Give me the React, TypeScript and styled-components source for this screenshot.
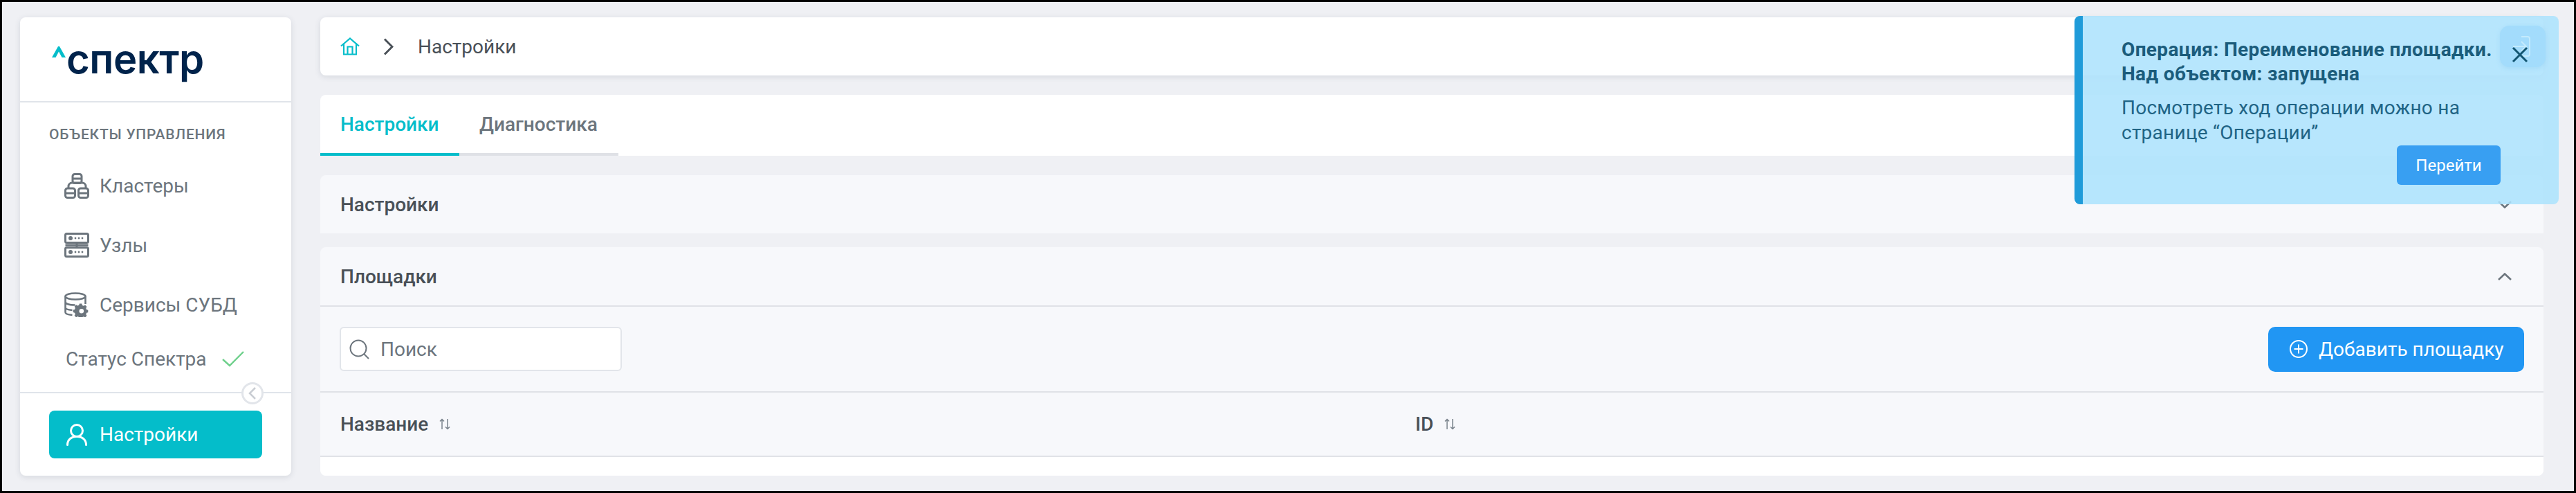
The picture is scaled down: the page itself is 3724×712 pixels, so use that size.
import React from 'react';
import styled, { createGlobalStyle } from 'styled-components';

const Global = createGlobalStyle`
  html, body { margin: 0; padding: 0; background: #000; }
  * { box-sizing: border-box; }
  body { font-family: Roboto, "Noto Sans", sans-serif; }
`;

const Frame = styled.div`
  position: relative;
  width: 3724px;
  height: 712px;
  border: 3px solid #000;
  background: #eff0f4;
  display: flex;
  gap: 42px;
  padding: 22px 44px 22px 26px;
  overflow: hidden;
`;

const Sidebar = styled.aside`
  position: relative;
  width: 392px;
  flex: none;
  display: flex;
  flex-direction: column;
  background: #fff;
  border-radius: 8px;
  box-shadow: 0 2px 8px rgba(60, 70, 90, 0.14);
`;

const LogoArea = styled.div`
  height: 123px;
  flex: none;
  display: flex;
  align-items: flex-start;
  padding: 42px 0 0 46px;
  border-bottom: 2px solid #e0e4ea;
`;

const LogoMark = styled.svg`
  width: 20px;
  height: 16px;
  flex: none;
`;

const LogoText = styled.span`
  font-family: Inter, sans-serif;
  font-weight: 600;
  font-size: 58px;
  line-height: 50px;
  letter-spacing: -0.5px;
  color: #00234b;
  margin: -7px 0 0 1px;
`;

const SideBody = styled.div`
  flex: 1;
  padding: 30px 0 0 42px;
`;

const SectionLabel = styled.div`
  font-size: 21px;
  font-weight: 500;
  line-height: 32px;
  letter-spacing: 0.75px;
  color: #6c757d;
  margin-bottom: 15px;
`;

const NavItem = styled.div`
  height: 86px;
  display: flex;
  align-items: center;
  gap: 15px;
  padding-left: 22px;
  font-size: 28px;
  color: #6c757d;
`;

const StatusRow = styled.div`
  height: 71px;
  display: flex;
  align-items: center;
  gap: 22px;
  padding-left: 24px;
  font-size: 28px;
  color: #6c757d;
`;

const SideFooter = styled.div`
  flex: none;
  height: 121px;
  padding: 25px 42px;
  border-top: 2px solid #e0e4ea;
`;

const ActiveButton = styled.div`
  height: 69px;
  display: flex;
  align-items: center;
  gap: 18px;
  padding-left: 25px;
  border-radius: 8px;
  background: #04bdca;
  color: #fff;
  font-size: 28px;
`;

const Collapse = styled.div`
  position: absolute;
  left: 320px;
  top: 527px;
  width: 32px;
  height: 32px;
  border-radius: 50%;
  border: 3px solid #e2e5ea;
  background: #fff;
  display: flex;
  align-items: center;
  justify-content: center;
`;

const Main = styled.main`
  flex: 1;
  min-width: 0;
  display: flex;
  flex-direction: column;
`;

const Breadcrumbs = styled.div`
  height: 84px;
  flex: none;
  display: flex;
  align-items: center;
  padding-left: 29px;
  background: #fff;
  border-radius: 8px;
  box-shadow: 0 2px 8px rgba(60, 70, 90, 0.14);
  font-size: 28px;
  color: #495057;
`;

const Crumb = styled.span`
  margin-left: 35px;
`;

const ChevronBox = styled.span`
  display: flex;
  margin-left: 34px;
`;

const TabsCard = styled.div`
  height: 88px;
  flex: none;
  margin-top: 28px;
  display: flex;
  background: #fff;
  border-radius: 8px 8px 0 0;
`;

const Tab = styled.div<{ $active?: boolean; $w: number }>`
  width: ${p => p.$w}px;
  height: 88px;
  padding-left: 29px;
  display: flex;
  align-items: center;
  font-size: 28px;
  font-weight: 500;
  color: ${p => (p.$active ? '#04bdca' : '#6c757d')};
  border-bottom: 4px solid ${p => (p.$active ? '#04bdca' : '#dfe1e6')};
`;

const Panel = styled.section<{ $grow?: boolean; $gap: number }>`
  margin-top: ${p => p.$gap}px;
  flex: ${p => (p.$grow ? '1' : 'none')};
  display: flex;
  flex-direction: column;
  background: #f7f8fb;
  border-radius: ${p => (p.$grow ? '8px' : '8px 8px 0 0')};
  overflow: hidden;
`;

const PanelHead = styled.div`
  height: 84px;
  flex: none;
  display: flex;
  align-items: center;
  justify-content: space-between;
  padding: 0 46px 0 29px;
  font-size: 28px;
  font-weight: 500;
  color: #495057;
`;

const Toolbar = styled.div`
  height: 124px;
  flex: none;
  display: flex;
  align-items: center;
  justify-content: space-between;
  padding: 0 28px;
  border-top: 2px solid #e0e2e7;
`;

const Search = styled.div`
  width: 408px;
  height: 64px;
  display: flex;
  align-items: center;
  gap: 16px;
  padding-left: 12px;
  background: #fff;
  border: 2px solid #e2e5ea;
  border-radius: 6px;
  font-size: 28px;
  color: #6c757d;
`;

const AddButton = styled.button`
  width: 370px;
  height: 65px;
  display: flex;
  align-items: center;
  gap: 16px;
  padding: 0 0 0 31px;
  border: 0;
  border-radius: 10px;
  background: #2196f3;
  color: #fff;
  font-family: Roboto, sans-serif;
  font-size: 28px;
`;

const TableHead = styled.div`
  height: 95px;
  flex: none;
  display: grid;
  grid-template-columns: 1554px 1fr;
  align-items: center;
  border-top: 2px solid #e0e2e7;
  border-bottom: 2px solid #e0e2e7;
`;

const HeadCell = styled.div`
  display: flex;
  align-items: center;
  gap: 16px;
  padding-left: 29px;
  font-size: 28px;
  font-weight: 500;
  color: #495057;
`;

const TableBody = styled.div`
  flex: 1;
  background: #fff;
`;

const Toast = styled.div`
  position: absolute;
  top: 20px;
  right: 22px;
  width: 700px;
  height: 272px;
  padding: 31px 0 0 56px;
  border-left: 12px solid #1f9bd9;
  border-radius: 8px;
  background: rgba(173, 227, 253, 0.88);
  display: flex;
  flex-direction: column;
`;

const ToastTitle = styled.div`
  font-size: 28px;
  font-weight: 700;
  line-height: 35px;
  letter-spacing: 0.35px;
  color: #1b5c7b;
`;

const ToastText = styled.div`
  margin-top: 14px;
  font-size: 28px;
  line-height: 36px;
  letter-spacing: 0.25px;
  color: #1f6485;
`;

const ToastClose = styled.div`
  position: absolute;
  top: 14px;
  right: 19px;
  width: 66px;
  height: 60px;
  border-radius: 14px;
  background: #a3dcfc;
  box-shadow: 0 2px 6px rgba(100, 180, 230, 0.2);
`;

const CloseIcon = styled.svg`
  display: block;
`;

const ToastAction = styled.div`
  width: 150px;
  height: 58px;
  align-self: flex-end;
  margin: auto 84px 28px 0;
  display: flex;
  align-items: center;
  justify-content: center;
  border-radius: 6px;
  background: #389ff2;
  color: #fff;
  font-size: 24px;
`;

const G = '#6c757d';

const ClustersIcon = () => (
  <svg width="36" height="37" viewBox="0 0 36 37" fill="none" stroke={G} strokeWidth="3">
    <rect x="12" y="1.5" width="13" height="13" rx="3" />
    <path d="M12 8h13M6 23v-4a5 5 0 0 1 5-5h15a5 5 0 0 1 5 5v4" />
    <rect x="1.5" y="22" width="14" height="13.5" rx="3" />
    <rect x="20.5" y="22" width="14" height="13.5" rx="3" />
    <path d="M1.5 29h14M20.5 29h14" />
  </svg>
);

const NodesIcon = () => (
  <svg width="36" height="36" viewBox="0 0 36 36" fill="none" stroke={G} strokeWidth="3">
    <rect x="1.5" y="1.5" width="33" height="13" rx="2" />
    <rect x="1.5" y="21.5" width="33" height="13" rx="2" />
    <path d="M18 14.5v7M1.5 18h33" />
    <g fill={G} stroke="none">
      <circle cx="9" cy="8" r="3" /><circle cx="16" cy="8" r="1.4" /><circle cx="21" cy="8" r="1.4" /><circle cx="26" cy="8" r="1.4" />
      <circle cx="9" cy="28" r="3" /><circle cx="16" cy="28" r="1.4" /><circle cx="21" cy="28" r="1.4" /><circle cx="26" cy="28" r="1.4" />
    </g>
  </svg>
);

const DbIcon = () => (
  <svg width="36" height="36" viewBox="0 0 36 36" fill="none" stroke={G} strokeWidth="2.6">
    <ellipse cx="16" cy="6" rx="14.5" ry="4.5" />
    <path d="M1.5 6v23c0 2 4 3.5 10 4M30.500 6v11M1.500 14c0 2.500 5 4.500 14 4.500M1.500 22c0 2 4 3.500 10 4" />
    <g stroke="none" fill={G}>
      <path d="M22.500 16h4l.7 2.700 2.500 1 2.400-1.400 2.800 2.800-1.400 2.400 1 2.500 2.500.7v4l-2.500.7-1 2.500 1.400 2.400-2.800 2.800-2.400-1.400-2.500 1-.7 2.100h-4l-.7-2.300-2.500-1-2.400 1.400-2.800-2.800 1.400-2.400-1-2.500-2.600-.7v-4l2.600-.7 1-2.500-1.400-2.400 2.800-2.800 2.400 1.400 2.500-1z" transform="translate(2.500 2.800) scale(.86)" />
    </g>
    <circle cx="24.800" cy="27.200" r="3.300" fill="#fff" stroke="none" />
  </svg>
);

const UserIcon = () => (
  <svg width="30" height="32" viewBox="0 0 30 32" fill="none" stroke="#fff" strokeWidth="3" strokeLinecap="round">
    <circle cx="15" cy="10" r="8.500" />
    <path d="M1.500 30.500c0-7 5-12 13.500-12s13.500 5 13.500 12" />
  </svg>
);

const SortIcon = () => (
  <svg width="16" height="17" viewBox="0 0 16 17" fill="none" stroke="#7a838c" strokeWidth="1.500">
    <path d="M4 16V1.500M1 4.500l3-3 3 3M12 1v14.500M9 12.500l3 3 3-3" />
  </svg>
);

const ChevronSmall = ({ up }: { up?: boolean }) => (
  <svg width="20" height="11" viewBox="0 0 20 11" fill="none" stroke="#6c757d" strokeWidth="2.600">
    <path d={up ? 'M1 10l9-8.500 9 8.500' : 'M1 1l9 8.500 9-8.500'} />
  </svg>
);

export default function App() {
  return (
    <>
      <Global />
      <Frame>
        <Sidebar>
          <LogoArea>
            <LogoMark viewBox="0 0 20 16"><path d="M9 0L0 16h5.500L10 7.500 14.500 16H20L11 0z" fill="#04bdca" /></LogoMark>
            <LogoText>спектр</LogoText>
          </LogoArea>
          <SideBody>
            <SectionLabel>ОБЪЕКТЫ УПРАВЛЕНИЯ</SectionLabel>
            <NavItem><ClustersIcon />Кластеры</NavItem>
            <NavItem><NodesIcon />Узлы</NavItem>
            <NavItem><DbIcon />Сервисы СУБД</NavItem>
            <StatusRow>
              Статус Спектра
              <svg width="32" height="23" viewBox="0 0 32 23" fill="none" stroke="#6fd08c" strokeWidth="2.400"><path d="M1 12l10 9L31 1" /></svg>
            </StatusRow>
          </SideBody>
          <SideFooter>
            <ActiveButton><UserIcon />Настройки</ActiveButton>
          </SideFooter>
          <Collapse>
            <svg width="12" height="20" viewBox="0 0 12 20" fill="none" stroke="#c9cdd3" strokeWidth="2.500"><path d="M10 2L2 10l8 8" /></svg>
          </Collapse>
        </Sidebar>
        <Main>
          <Breadcrumbs>
            <svg width="28" height="26" viewBox="0 0 28 26" fill="none" stroke="#04bdca" strokeWidth="2.200">
              <path d="M1 12.500L14 1.500l13 11M5 10v14.500h18V10M10.500 24.500v-11h7v11" />
            </svg>
            <ChevronBox>
              <svg width="15" height="25" viewBox="0 0 15 25" fill="none" stroke="#495057" strokeWidth="3"><path d="M2 1.500l11 11-11 11" /></svg>
            </ChevronBox>
            <Crumb>Настройки</Crumb>
          </Breadcrumbs>
          <TabsCard>
            <Tab $active $w={201}>Настройки</Tab>
            <Tab $w={230}>Диагностика</Tab>
          </TabsCard>
          <Panel $gap={28}>
            <PanelHead>Настройки<ChevronSmall /></PanelHead>
          </Panel>
          <Panel $gap={20} $grow>
            <PanelHead>Площадки<ChevronSmall up /></PanelHead>
            <Toolbar>
              <Search>
                <svg width="29" height="29" viewBox="0 0 29 29" fill="none" stroke="#6c757d" strokeWidth="2"><circle cx="13" cy="13" r="11.500" /><path d="M21 21l7 7" /></svg>
                Поиск
              </Search>
              <AddButton>
                <svg width="26" height="26" viewBox="0 0 26 26" fill="none" stroke="#fff" strokeWidth="2"><circle cx="13" cy="13" r="12" /><path d="M13 6.500v13M6.500 13h13" /></svg>
                Добавить площадку
              </AddButton>
            </Toolbar>
            <TableHead>
              <HeadCell>Название<SortIcon /></HeadCell>
              <HeadCell>ID<SortIcon /></HeadCell>
            </TableHead>
            <TableBody />
          </Panel>
        </Main>
        <Toast>
          <ToastClose>
            <CloseIcon width="66" height="60" viewBox="0 0 66 60" fill="none">
              <path d="M31 16h9a3 3 0 0 1 3 3v22a3 3 0 0 1-3 3h-9M19 30h18M31 23l7 7-7 7" stroke="#c4ebfd" strokeWidth="2" />
              <path d="M19 32l20 20M39 32L19 52" stroke="#135672" strokeWidth="3" />
            </CloseIcon>
          </ToastClose>
          <ToastTitle>Операция: Переименование площадки.<br />Над объектом: запущена</ToastTitle>
          <ToastText>Посмотреть ход операции можно на<br />странице “Операции”</ToastText>
          <ToastAction>Перейти</ToastAction>
        </Toast>
      </Frame>
    </>
  );
}
